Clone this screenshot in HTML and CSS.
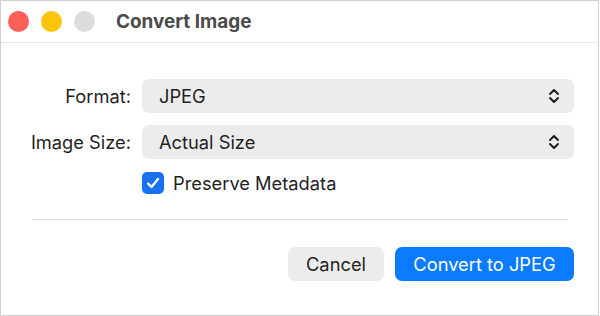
FILE: index.html
```html
<!DOCTYPE html>
<html lang="en">
<head>
    <meta charset="UTF-8">
    <meta name="viewport" content="width=device-width, initial-scale=1.0">
    <title>Convert Image</title>
    <link rel="stylesheet" href="styles.css">
</head>
<body>
    <div class="window">
        <div class="titlebar">
            <span class="light red"></span>
            <span class="light yellow"></span>
            <span class="light grey"></span>
            <h1 class="title">Convert Image</h1>
        </div>

        <form class="convert-form">
            <div class="form-row">
                <label for="format">Format:</label>
                <div class="select" id="format">
                    <span>JPEG</span>
                    <svg class="chevron" width="12" height="16" viewBox="0 0 12 16">
                        <path d="M2 6 L6 2 L10 6 M2 10 L6 14 L10 10" fill="none" stroke="#1c1c1c" stroke-width="1.9" stroke-linecap="round" stroke-linejoin="round"/>
                    </svg>
                </div>
            </div>
            <div class="form-row">
                <label for="size">Image Size:</label>
                <div class="select" id="size">
                    <span>Actual Size</span>
                    <svg class="chevron" width="12" height="16" viewBox="0 0 12 16">
                        <path d="M2 6 L6 2 L10 6 M2 10 L6 14 L10 10" fill="none" stroke="#1c1c1c" stroke-width="1.9" stroke-linecap="round" stroke-linejoin="round"/>
                    </svg>
                </div>
            </div>
            <div class="form-row check-row">
                <span></span>
                <div class="check">
                    <span class="checkbox">
                        <svg width="22" height="22" viewBox="0 0 22 22">
                            <path d="M6 11.5 L9.5 15 L16 7" fill="none" stroke="#fff" stroke-width="2.4" stroke-linecap="round" stroke-linejoin="round"/>
                        </svg>
                    </span>
                    <span>Preserve Metadata</span>
                </div>
            </div>

            <hr class="divider">

            <div class="actions">
                <button type="button" class="btn cancel">Cancel</button>
                <button type="submit" class="btn primary">Convert to JPEG</button>
            </div>
        </form>
    </div>
</body>
</html>
```

FILE: styles.css
```css
* {
    margin: 0;
    padding: 0;
    box-sizing: border-box;
}

body {
    font-family: Inter, "Noto Sans", Arial, sans-serif;
    background: #fff;
    color: #1f1f1f;
}

.window {
    width: 599px;
    height: 316px;
    border: 1px solid #d2d2d2;
    background: #fff;
}

.titlebar {
    display: flex;
    align-items: center;
    height: 42px;
    padding-left: 7px;
    border-bottom: 1px solid #e6e6e6;
}

.light {
    width: 21px;
    height: 21px;
    border-radius: 50%;
    margin-right: 12px;
}

.red { background: #fe5f58; }
.yellow { background: #fcc40b; }
.grey { background: #dcdcdc; }

.title {
    margin-left: 9px;
    font-size: 18.9px;
    font-weight: 700;
    color: #4a4a4a;
}

.convert-form {
    padding: 36px 24px 0 0;
}

.form-row {
    display: grid;
    grid-template-columns: 130px 1fr;
    column-gap: 11px;
    align-items: center;
    margin-bottom: 12px;
}

.form-row label {
    text-align: right;
    font-size: 18.3px;
}

.select {
    display: flex;
    align-items: center;
    justify-content: space-between;
    height: 34px;
    padding: 0 14px 0 17px;
    background: #ececec;
    border-radius: 7px;
    font-size: 18.3px;
}

.check-row {
    margin-top: 13px;
}

.check {
    display: flex;
    align-items: center;
    gap: 9px;
    font-size: 18.3px;
}

.checkbox {
    display: block;
    width: 22px;
    height: 22px;
    border-radius: 5px;
    background: #1a71ef;
}

.checkbox svg {
    display: block;
}

.divider {
    border: none;
    border-top: 1px solid #e2e2e2;
    margin: 25px 6px 0 31px;
}

.actions {
    display: flex;
    justify-content: flex-end;
    gap: 11px;
    margin-top: 27px;
}

.btn {
    height: 34px;
    border: none;
    border-radius: 7px;
    font-family: inherit;
    font-size: 18.3px;
}

.cancel {
    width: 96px;
    background: #ececec;
    color: #1f1f1f;
}

.primary {
    width: 179px;
    background: #0b7bff;
    color: #fff;
}
```
